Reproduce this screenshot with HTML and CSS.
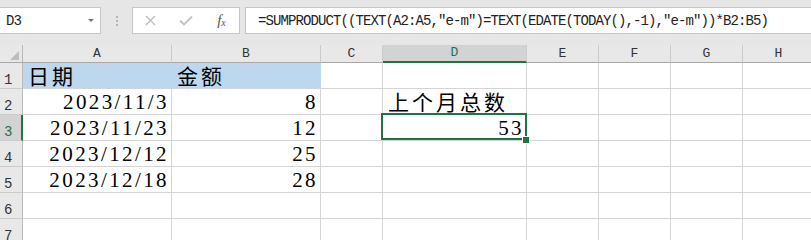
FILE: index.html
```html
<!DOCTYPE html>
<html lang="zh-CN">
<head>
  <meta charset="UTF-8">
  <title>上个月总数</title>
  <link rel="stylesheet" href="styles.css">
</head>
<body>
  <div class="toolbar">
    <div class="namebox">
      <span>D3</span>
      <span class="arrow"></span>
    </div>
    <div class="grip"><i></i><i></i><i></i></div>
    <div class="fxbox">
      <span class="btn">
        <svg width="11" height="11" viewBox="0 0 11 11"><path d="M1 1L10 10M10 1L1 10" stroke="#bdbdbd" stroke-width="1.3" fill="none"/></svg>
      </span>
      <span class="btn">
        <svg width="14" height="11" viewBox="0 0 14 11"><path d="M1 5.5L5 9.5L13 1.5" stroke="#c2c2c2" stroke-width="1.8" fill="none"/></svg>
      </span>
      <span class="btn fx">f<small>x</small></span>
    </div>
    <div class="formula">=SUMPRODUCT((TEXT(A2:A5,"e-m")=TEXT(EDATE(TODAY(),-1),"e-m"))*B2:B5)</div>
  </div>

  <div class="sheet">
    <!-- column headers -->
    <div class="corner"><span class="tri"></span></div>
    <div class="ch">A</div>
    <div class="ch">B</div>
    <div class="ch">C</div>
    <div class="ch on">D</div>
    <div class="ch">E</div>
    <div class="ch">F</div>
    <div class="ch">G</div>
    <div class="ch">H</div>

    <!-- row 1 -->
    <div class="rh">1</div>
    <div class="c txt blue">日期</div>
    <div class="c txt blue">金额</div>
    <div class="c"></div>
    <div class="c"></div>
    <div class="c"></div>
    <div class="c"></div>
    <div class="c"></div>
    <div class="c"></div>

    <!-- row 2 -->
    <div class="rh">2</div>
    <div class="c num">2023/11/3</div>
    <div class="c num">8</div>
    <div class="c"></div>
    <div class="c txt">上个月总数</div>
    <div class="c"></div>
    <div class="c"></div>
    <div class="c"></div>
    <div class="c"></div>

    <!-- row 3 -->
    <div class="rh on">3</div>
    <div class="c num">2023/11/23</div>
    <div class="c num">12</div>
    <div class="c"></div>
    <div class="c num active">53</div>
    <div class="c"></div>
    <div class="c"></div>
    <div class="c"></div>
    <div class="c"></div>

    <!-- row 4 -->
    <div class="rh">4</div>
    <div class="c num">2023/12/12</div>
    <div class="c num">25</div>
    <div class="c"></div>
    <div class="c"></div>
    <div class="c"></div>
    <div class="c"></div>
    <div class="c"></div>
    <div class="c"></div>

    <!-- row 5 -->
    <div class="rh">5</div>
    <div class="c num">2023/12/18</div>
    <div class="c num">28</div>
    <div class="c"></div>
    <div class="c"></div>
    <div class="c"></div>
    <div class="c"></div>
    <div class="c"></div>
    <div class="c"></div>

    <!-- row 6 -->
    <div class="rh">6</div>
    <div class="c"></div>
    <div class="c"></div>
    <div class="c"></div>
    <div class="c"></div>
    <div class="c"></div>
    <div class="c"></div>
    <div class="c"></div>
    <div class="c"></div>

    <!-- row 7 -->
    <div class="rh">7</div>
    <div class="c"></div>
    <div class="c"></div>
    <div class="c"></div>
    <div class="c"></div>
    <div class="c"></div>
    <div class="c"></div>
    <div class="c"></div>
    <div class="c"></div>
  </div>
</body>
</html>
```

FILE: styles.css
```css
body {
  margin: 0;
  width: 811px;
  height: 240px;
  overflow: hidden;
  background-color: #fff;
  font-family: 'Liberation Serif', serif;
  color: #000;
}

/* formula bar */
.toolbar {
  height: 45px;
  box-sizing: border-box;
  padding-top: 7px;
  background-color: #e6e6e6;
  display: flex;
  align-items: flex-start;
}

.namebox,
.fxbox,
.formula {
  height: 27px;
  box-sizing: border-box;
  border: 1px solid #c6c6c6;
  background-color: #fff;
  display: flex;
  align-items: center;
}

.namebox {
  width: 102px;
  margin-left: -1px;
  padding-left: 6px;
  font-family: 'Liberation Mono', monospace;
  font-size: 14px;
  letter-spacing: -0.9px;
  color: #222;
}

.arrow {
  margin-left: auto;
  margin-right: 6px;
  width: 0;
  height: 0;
  border-left: 3px solid transparent;
  border-right: 3px solid transparent;
  border-top: 3px solid #777;
}

.grip {
  width: 31px;
  height: 27px;
  display: flex;
  flex-direction: column;
  align-items: center;
  justify-content: center;
  gap: 2px;
}

.grip i {
  width: 2px;
  height: 2px;
  background-color: #b5b5b5;
}

.fxbox {
  width: 108px;
}

.btn {
  width: 36px;
  display: flex;
  justify-content: center;
  align-items: center;
}

.fx {
  font-family: 'Liberation Serif', serif;
  font-style: italic;
  font-size: 15px;
  color: #555;
  padding-left: 1px;
}

.fx small {
  font-size: 10px;
  margin-top: 4px;
}

.formula {
  flex: 1;
  margin-left: 5px;
  margin-right: -5px;
  padding-left: 12px;
  font-family: 'Liberation Mono', monospace;
  font-size: 14px;
  letter-spacing: -0.9px;
  color: #222;
  white-space: nowrap;
}

/* grid */
.sheet {
  display: grid;
  grid-template-columns: 23px 149px 149px 62px 144px 72px 72px 72px 72px;
  grid-template-rows: 18px;
  grid-auto-rows: 26px;
}

.sheet > div {
  box-sizing: border-box;
  white-space: nowrap;
}

.corner {
  background-color: #e8e8e8;
  border-right: 1px solid #b8b8b8;
  border-bottom: 1px solid #a8a8a8;
  display: flex;
  justify-content: flex-end;
  align-items: flex-end;
  padding: 0 3px 2px 0;
}

.tri {
  width: 0;
  height: 0;
  border-left: 9px solid transparent;
  border-bottom: 9px solid #bcbcbc;
}

.ch {
  background-color: #e8e8e8;
  border-right: 1px solid #cbcbcb;
  border-bottom: 1px solid #a8a8a8;
  display: flex;
  justify-content: center;
  align-items: flex-end;
  padding-bottom: 2px;
  font-family: 'Liberation Mono', monospace;
  font-size: 13px;
  line-height: 13px;
  color: #333;
}

.rh {
  background-color: #e8e8e8;
  border-right: 1px solid #b8b8b8;
  border-bottom: 1px solid #cbcbcb;
  display: flex;
  align-items: flex-end;
  padding: 0 0 1px 4px;
  font-family: 'Liberation Mono', monospace;
  font-size: 14px;
  line-height: 14px;
  color: #333;
}

.ch.on {
  background-color: #d3d3d3;
  color: #217346;
  border-bottom: 2px solid #217346;
}

.rh.on {
  background-color: #d3d3d3;
  color: #217346;
  border-right: 2px solid #217346;
}

.c {
  border-right: 1px solid #d4d4d4;
  border-bottom: 1px solid #d4d4d4;
  display: flex;
  align-items: flex-end;
  padding: 0 2px 2px 5px;
}

.num {
  justify-content: flex-end;
  font-family: 'Liberation Serif', serif;
  font-size: 21px;
  line-height: 20px;
  letter-spacing: 2.4px;
}

.txt {
  font-family: 'Noto Sans CJK SC', sans-serif;
  font-size: 21px;
  line-height: 21px;
  letter-spacing: 3px;
}

.blue {
  background-color: #bdd7ee;
  border-right-color: #bdd7ee;
}

/* selected cell */
.active {
  position: relative;
}

.active::after {
  content: '';
  position: absolute;
  left: -2px;
  top: -2px;
  right: -1px;
  bottom: 0;
  border: 2px solid #217346;
}

.active::before {
  content: '';
  position: absolute;
  right: -4px;
  bottom: -4px;
  width: 6px;
  height: 6px;
  background-color: #217346;
  border: 1px solid #fff;
  z-index: 1;
}
```
